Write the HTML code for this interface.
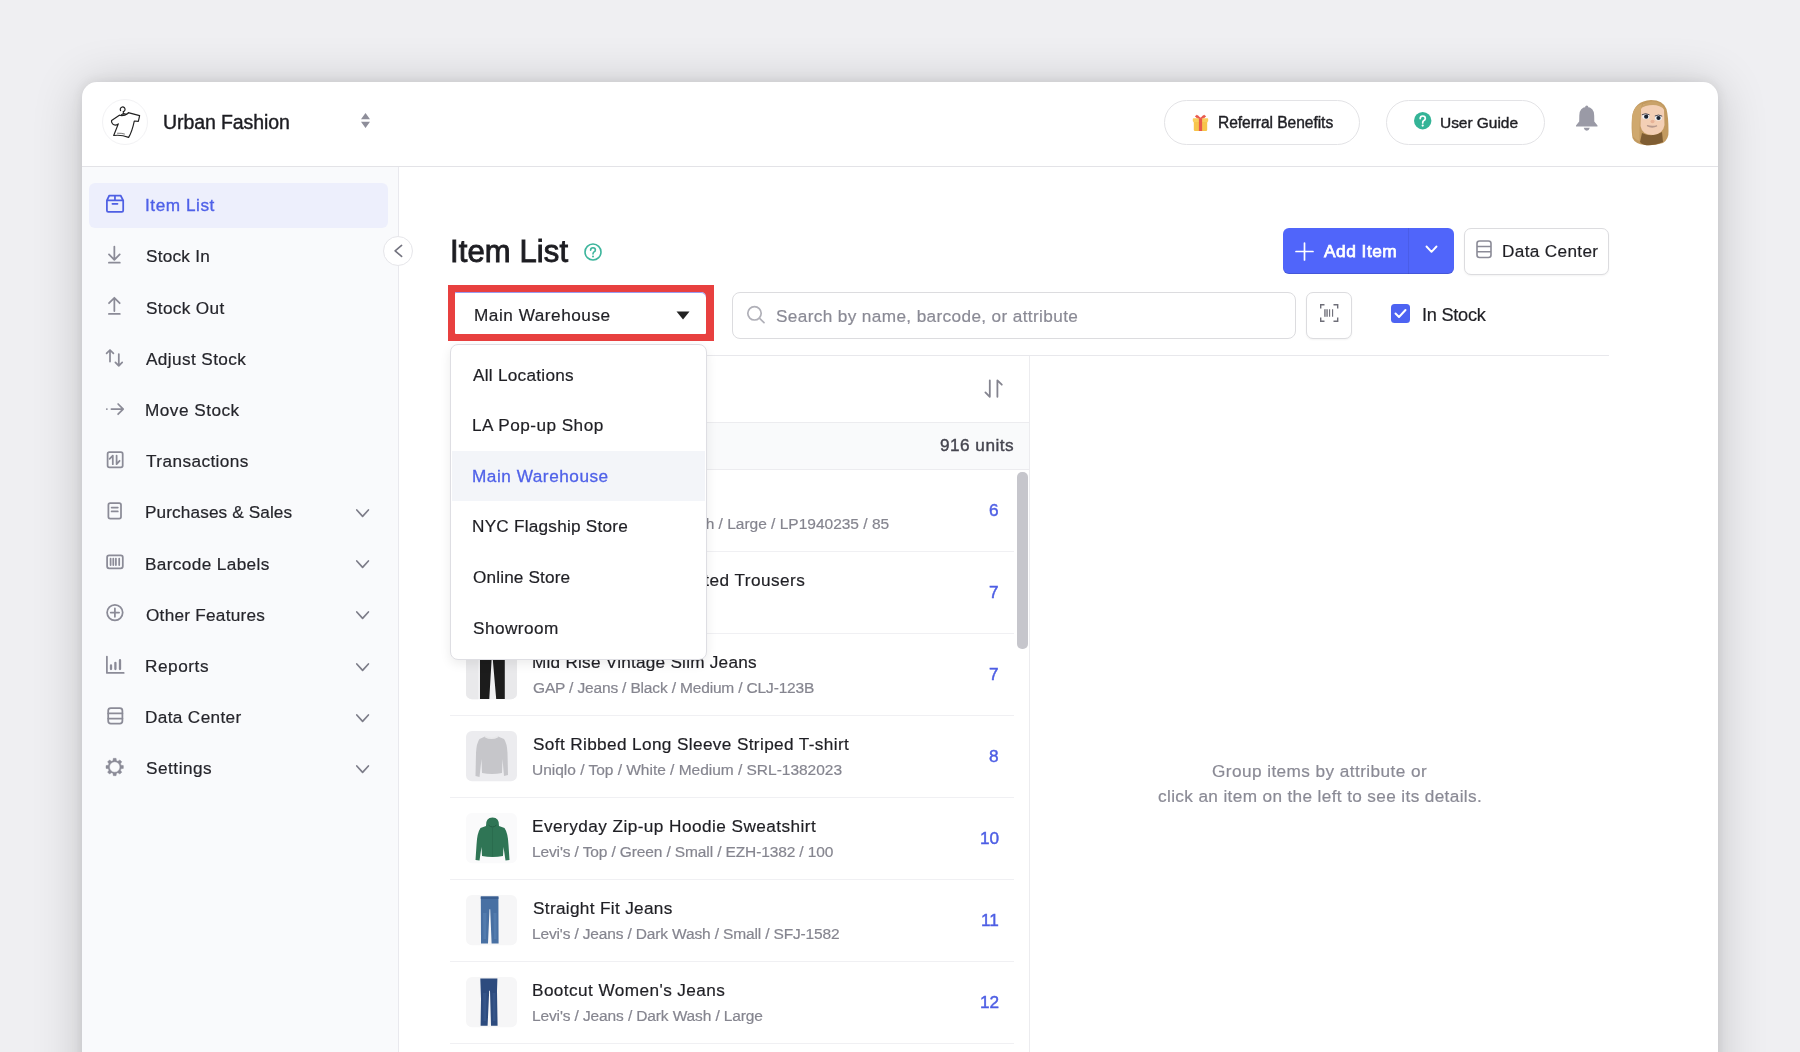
<!DOCTYPE html><html><head><meta charset='utf-8'><style>
*{margin:0;padding:0;box-sizing:border-box}
html,body{width:1800px;height:1052px;overflow:hidden;background:#efeff2;-webkit-font-smoothing:antialiased;font-family:"Liberation Sans",sans-serif;color:#1f1f24}
.a{position:absolute}
.t{position:absolute;line-height:1;white-space:nowrap;will-change:transform;-webkit-text-stroke:0.2px currentColor}
svg{position:absolute;overflow:visible}
</style></head><body>
<div class="a" style="left:82px;top:82px;width:1636px;height:1040px;background:#fff;border-radius:15px;box-shadow:0 4px 50px rgba(0,0,0,0.19),0 0 12px rgba(0,0,0,0.09)"></div>
<div class="a" style="left:82px;top:166px;width:1636px;height:1px;background:#e3e3e7;"></div>
<div class="a" style="left:82px;top:167px;width:317px;height:900px;background:#f9fafc;border-right:1px solid #e9e9ee"></div>
<div class="a" style="left:102px;top:99px;width:46px;height:46px;background:#fff;border-radius:50%;border:1px solid #f2f2f4"></div>
<svg style="left:105px;top:102px;" width="40" height="40" viewBox="0 0 40 40"><g fill="none" stroke="#222" stroke-width="1.2" stroke-linecap="round" stroke-linejoin="round"><path d="M15.6 8.6 A2.4 2.4 0 1 1 18.2 9.7 L18.7 11.8"/><path d="M16.2 12.9 L18.4 11.6 L21.6 12.3"/><path d="M14.4 13.3 Q18.6 14.6 23.2 11.2"/><path d="M23.2 10.6 L34.6 13.7 Q34 17 33.3 19.4 L29.3 19 Q27 30 23.6 35.4 Q16 32.5 8.7 33.5 L13.3 21.9 Q10 24.2 7.6 21.8 Q6 20 6.6 18.6 L14.4 13.3"/><path d="M12.5 31.2 Q16.5 31 19.5 32" stroke-width="1" opacity="0.6"/></g></svg>
<div class="t" style="top:113.19px;font-size:19.5px;color:#1d1d22;-webkit-text-stroke:0.4px currentColor;letter-spacing:-0.088px;left:163.00px;">Urban Fashion</div>
<svg style="left:360px;top:112px;" width="11" height="17" viewBox="0 0 11 17"><path d="M5.5 1 L10 7.3 L1 7.3 Z M1 9.7 L10 9.7 L5.5 16 Z" fill="#8e8e9a"/></svg>
<div class="a" style="left:1164px;top:99.5px;width:196px;height:45.5px;background:#fff;border:1px solid #e3e3e6;border-radius:23px"></div>
<svg style="left:1192px;top:113.5px;" width="17" height="17" viewBox="0 0 17 17"><rect x="1.8" y="7" width="13.4" height="10" rx="1.2" fill="#f7c54b"/><rect x="0.8" y="4.3" width="15.4" height="3.6" rx="0.8" fill="#f9cf5c"/><rect x="6.9" y="4.3" width="3.2" height="12.7" fill="#e8594b"/><path d="M8.5 4.3 Q5 0 3.6 2 Q3 3.8 8.5 4.3 M8.5 4.3 Q12 0 13.4 2 Q14 3.8 8.5 4.3" fill="#e8594b" stroke="#e8594b" stroke-width="0.8"/></svg>
<div class="t" style="top:114.79px;font-size:15.6px;color:#1f1f24;-webkit-text-stroke:0.4px currentColor;letter-spacing:-0.059px;left:1218.00px;">Referral Benefits</div>
<div class="a" style="left:1386px;top:99.5px;width:159px;height:45.5px;background:#fff;border:1px solid #e3e3e6;border-radius:23px"></div>
<svg style="left:1413.9px;top:111.8px;" width="18" height="18" viewBox="0 0 18 18"><circle cx="8.7" cy="8.7" r="8.7" fill="#34b497"/><path d="M6.2 6.6 Q6.2 4 8.7 4 Q11.3 4 11.3 6.4 Q11.3 7.9 9.6 8.7 Q8.7 9.2 8.7 10.9" fill="none" stroke="#fff" stroke-width="1.7" stroke-linecap="round"/><circle cx="8.7" cy="13.6" r="1.1" fill="#fff"/></svg>
<div class="t" style="top:114.88px;font-size:15.5px;color:#1f1f24;-webkit-text-stroke:0.4px currentColor;letter-spacing:-0.041px;left:1440.10px;">User Guide</div>
<svg style="left:1575.5px;top:104px;" width="22" height="27" viewBox="0 0 22 27"><path d="M10.75 3 Q18 3 18.2 11.5 L18.3 17.5 L21.5 21.4 L21.5 22.6 L0 22.6 L0 21.4 L3.2 17.5 L3.3 11.5 Q3.5 3 10.75 3 Z" fill="#9a9aa6"/><circle cx="10.75" cy="3" r="1.6" fill="#9a9aa6"/><path d="M7.7 23.8 Q8.5 26.8 10.75 26.8 Q13 26.8 13.8 23.8 Z" fill="#9a9aa6"/></svg>
<svg style="left:1625px;top:95px;" width="50" height="55" viewBox="0 0 50 55"><path d="M26 5 Q38 5 41.5 14 Q43.5 22 43.5 36 Q44 44 38 48 Q28 51 20 50 Q10 49 7.5 43 Q6 34 7 22 Q9 6 26 5 Z" fill="#c29a60"/><path d="M17 38 Q27 43 37 37 L38 47 Q28 51 20 50 Q16 49 15 47 Z" fill="#7f5d33"/><path d="M16 14 Q18 7.5 27 7.5 Q37 8 39 15 L39.5 30 Q38 39 28 40 Q17 40 15.5 31 Z" fill="#f3cfb5"/><path d="M15 14 Q20 6 28 6.5 Q37 7 40 15 Q35 10 28 10 Q20 10 15 14 Z" fill="#c9a26a"/><path d="M7 22 Q9 10 17 9 Q14 20 14.5 46 Q9 44 7.5 40 Z" fill="#cfa86e"/><ellipse cx="20.8" cy="21.6" rx="3.6" ry="2.6" fill="#eef2f6"/><ellipse cx="33.4" cy="22.9" rx="3.5" ry="2.6" fill="#eef2f6"/><circle cx="21.2" cy="21.7" r="2.1" fill="#1b2230"/><circle cx="33.5" cy="23" r="2.1" fill="#1b2230"/><path d="M16.8 19.8 Q20.5 17.6 24.5 19.8 M29.8 21 Q33.5 19 37.2 21.2" fill="none" stroke="#3a3a48" stroke-width="0.9"/><ellipse cx="27.5" cy="26.5" rx="2" ry="1.8" fill="#e8b398"/><path d="M22 30.6 Q27 33.5 32 30.8 Q27 32.2 22 30.6 Z" fill="#9a8c86" stroke="#b89a8e" stroke-width="1.2"/></svg>
<div class="a" style="left:89px;top:183px;width:299px;height:45px;background:#edeffc;border-radius:6px"></div>
<div class="t" style="top:197.24px;font-size:17.2px;color:#4f61e8;-webkit-text-stroke:0.35px currentColor;letter-spacing:0.553px;left:145.00px;">Item List</div>
<div class="t" style="top:248.42px;font-size:17.2px;color:#25252b;letter-spacing:0.245px;left:146.00px;">Stock In</div>
<div class="t" style="top:299.60px;font-size:17.2px;color:#25252b;letter-spacing:0.339px;left:146.00px;">Stock Out</div>
<div class="t" style="top:350.78px;font-size:17.2px;color:#25252b;letter-spacing:0.397px;left:146.00px;">Adjust Stock</div>
<div class="t" style="top:401.96px;font-size:17.2px;color:#25252b;letter-spacing:0.489px;left:145.00px;">Move Stock</div>
<div class="t" style="top:453.14px;font-size:17.2px;color:#25252b;letter-spacing:0.422px;left:146.00px;">Transactions</div>
<div class="t" style="top:504.32px;font-size:17.2px;color:#25252b;letter-spacing:0.118px;left:145.00px;">Purchases &amp; Sales</div>
<svg style="left:356px;top:509.1px;" width="14" height="9" viewBox="0 0 14 9"><path d="M0.8 1 L6.6 7.3 L12.4 1" fill="none" stroke="#7d7d89" stroke-width="1.7" stroke-linecap="round" stroke-linejoin="round"/></svg>
<div class="t" style="top:555.50px;font-size:17.2px;color:#25252b;letter-spacing:0.373px;left:145.00px;">Barcode Labels</div>
<svg style="left:356px;top:560.3px;" width="14" height="9" viewBox="0 0 14 9"><path d="M0.8 1 L6.6 7.3 L12.4 1" fill="none" stroke="#7d7d89" stroke-width="1.7" stroke-linecap="round" stroke-linejoin="round"/></svg>
<div class="t" style="top:606.68px;font-size:17.2px;color:#25252b;letter-spacing:0.254px;left:146.00px;">Other Features</div>
<svg style="left:356px;top:611.4px;" width="14" height="9" viewBox="0 0 14 9"><path d="M0.8 1 L6.6 7.3 L12.4 1" fill="none" stroke="#7d7d89" stroke-width="1.7" stroke-linecap="round" stroke-linejoin="round"/></svg>
<div class="t" style="top:657.86px;font-size:17.2px;color:#25252b;letter-spacing:0.552px;left:145.00px;">Reports</div>
<svg style="left:356px;top:662.6px;" width="14" height="9" viewBox="0 0 14 9"><path d="M0.8 1 L6.6 7.3 L12.4 1" fill="none" stroke="#7d7d89" stroke-width="1.7" stroke-linecap="round" stroke-linejoin="round"/></svg>
<div class="t" style="top:709.04px;font-size:17.2px;color:#25252b;letter-spacing:0.356px;left:145.00px;">Data Center</div>
<svg style="left:356px;top:713.8px;" width="14" height="9" viewBox="0 0 14 9"><path d="M0.8 1 L6.6 7.3 L12.4 1" fill="none" stroke="#7d7d89" stroke-width="1.7" stroke-linecap="round" stroke-linejoin="round"/></svg>
<div class="t" style="top:760.22px;font-size:17.2px;color:#25252b;letter-spacing:0.513px;left:146.00px;">Settings</div>
<svg style="left:356px;top:765.0px;" width="14" height="9" viewBox="0 0 14 9"><path d="M0.8 1 L6.6 7.3 L12.4 1" fill="none" stroke="#7d7d89" stroke-width="1.7" stroke-linecap="round" stroke-linejoin="round"/></svg>
<svg style="left:105px;top:194.0px;" width="20" height="20" viewBox="0 0 20 20"><g fill="none" stroke="#4e5fe3" stroke-width="1.75" stroke-linecap="round" stroke-linejoin="round"><path d="M1.9 6.4 L4.3 1.5 H15.6 L18.2 6.4 V16.6 Q18.2 17.9 16.9 17.9 H3.2 Q1.9 17.9 1.9 16.6 Z M1.9 6.4 H18.2 M9.95 1.5 V6.4 M7.4 9.8 H12.5"/></g></svg>
<svg style="left:105px;top:245.18px;" width="20" height="20" viewBox="0 0 20 20"><g fill="none" stroke="#8b8b97" stroke-width="1.75" stroke-linecap="round" stroke-linejoin="round"><path d="M9.35 1.5 V14.6 M4 9.4 L9.35 14.8 L14.7 9.4 M3.9 17.7 H14.8"/></g></svg>
<svg style="left:105px;top:296.36px;" width="20" height="20" viewBox="0 0 20 20"><g fill="none" stroke="#8b8b97" stroke-width="1.75" stroke-linecap="round" stroke-linejoin="round"><path d="M9.35 15 V1.8 M4 7.2 L9.35 1.8 L14.7 7.2 M3.9 17.9 H14.8"/></g></svg>
<svg style="left:105px;top:347.54px;" width="20" height="20" viewBox="0 0 20 20"><g fill="none" stroke="#8b8b97" stroke-width="1.75" stroke-linecap="round" stroke-linejoin="round"><path d="M5 2 V13.6 M1.6 5.4 L5 2 L8.4 5.4 M13.8 6 V17.8 M10.4 14.4 L13.8 17.8 L17.2 14.4"/></g></svg>
<svg style="left:105px;top:398.72px;" width="20" height="20" viewBox="0 0 20 20"><g fill="none" stroke="#8b8b97" stroke-width="1.75" stroke-linecap="round" stroke-linejoin="round"><path d="M1.8 10.1 H1.9 M6.4 10.1 H18.2 M13.1 5 L18.2 10.1 L13.1 15.2"/></g></svg>
<svg style="left:105px;top:449.9px;" width="20" height="20" viewBox="0 0 20 20"><g fill="none" stroke="#8b8b97" stroke-width="1.75" stroke-linecap="round" stroke-linejoin="round"><rect x="2.6" y="2.1" width="15.1" height="15.3" rx="1.8"/><path d="M7.8 14.2 V5.6 L4.6 8.8 M11.6 5.6 V14.2 L14.6 10.8"/></g></svg>
<svg style="left:105px;top:501.08px;" width="20" height="20" viewBox="0 0 20 20"><g fill="none" stroke="#8b8b97" stroke-width="1.75" stroke-linecap="round" stroke-linejoin="round"><rect x="3.4" y="2.1" width="12.6" height="15.5" rx="1.8"/><path d="M6.6 6.6 H12.8 M6.6 10.4 H12.8"/></g></svg>
<svg style="left:105px;top:552.26px;" width="20" height="20" viewBox="0 0 20 20"><g fill="none" stroke="#8b8b97" stroke-width="1.75" stroke-linecap="round" stroke-linejoin="round"><rect x="2.1" y="3.4" width="15.7" height="12.9" rx="2"/><path d="M5.6 6.6 V13.1 M8.3 6.6 V13.1 M10.9 6.6 V13.1 M14.2 6.6 V13.1"/></g></svg>
<svg style="left:105px;top:603.44px;" width="20" height="20" viewBox="0 0 20 20"><g fill="none" stroke="#8b8b97" stroke-width="1.75" stroke-linecap="round" stroke-linejoin="round"><circle cx="9.9" cy="9.6" r="7.8"/><path d="M9.9 5.4 V13.8 M5.7 9.6 H14.1"/></g></svg>
<svg style="left:105px;top:654.62px;" width="20" height="20" viewBox="0 0 20 20"><g fill="none" stroke="#8b8b97" stroke-width="1.75" stroke-linecap="round" stroke-linejoin="round"><path d="M1.9 1.6 V17.9 H18.7"/><path d="M6 10.5 V14.1 M10.4 7.8 V14.1 M15 5.2 V14.1" stroke-width="2.3"/></g></svg>
<svg style="left:105px;top:705.8px;" width="20" height="20" viewBox="0 0 20 20"><g fill="none" stroke="#8b8b97" stroke-width="1.75" stroke-linecap="round" stroke-linejoin="round"><rect x="3.2" y="2.2" width="14.2" height="15.5" rx="2.6"/><path d="M3.2 7.4 H17.4 M3.2 12.6 H17.4"/></g></svg>
<svg style="left:105px;top:756.98px;" width="20" height="20" viewBox="0 0 20 20"><path d="M7.88 3.66 L8.32 1.31 L11.08 1.31 L11.52 3.66 L12.90 4.23 L14.87 2.88 L16.82 4.83 L15.47 6.80 L16.04 8.18 L18.39 8.62 L18.39 11.38 L16.04 11.82 L15.47 13.20 L16.82 15.17 L14.87 17.12 L12.90 15.77 L11.52 16.34 L11.08 18.69 L8.32 18.69 L7.88 16.34 L6.50 15.77 L4.53 17.12 L2.58 15.17 L3.93 13.20 L3.36 11.82 L1.01 11.38 L1.01 8.62 L3.36 8.18 L3.93 6.80 L2.58 4.83 L4.53 2.88 L6.50 4.23 Z M14.90 10.00 A5.2 5.2 0 1 0 4.50 10.00 A5.2 5.2 0 1 0 14.90 10.00 Z" fill="#8b8b97" fill-rule="evenodd" stroke="#8b8b97" stroke-width="0.4" stroke-linejoin="round"/></svg>
<div class="a" style="left:383.3px;top:236.3px;width:30.2px;height:30.2px;background:#fff;border-radius:50%;border:1px solid #e6e6ea"></div>
<svg style="left:393px;top:244px;" width="10" height="14" viewBox="0 0 10 14"><path d="M8.6 1.4 L2.1 6.8 L8.6 12.4" fill="none" stroke="#73737f" stroke-width="1.6" stroke-linecap="round" stroke-linejoin="round"/></svg>
<div class="t" style="top:235.56px;font-size:31px;color:#1d1d22;-webkit-text-stroke:0.9px currentColor;letter-spacing:0.109px;left:450.30px;">Item List</div>
<svg style="left:584px;top:243px;" width="18" height="18" viewBox="0 0 18 18"><circle cx="9" cy="9" r="8" fill="none" stroke="#3db59c" stroke-width="1.6"/><path d="M6.6 7.2 Q6.6 4.7 9 4.7 Q11.4 4.7 11.4 7 Q11.4 8.4 9.8 9.1 Q9 9.5 9 11" fill="none" stroke="#3db59c" stroke-width="1.6" stroke-linecap="round"/><circle cx="9" cy="13.4" r="1" fill="#3db59c"/></svg>
<div class="a" style="left:1283px;top:228px;width:171px;height:46.4px;background:#5065fa;border-radius:6px;box-shadow:inset 0 -1px 0 rgba(0,0,0,0.13)"></div>
<div class="a" style="left:1408px;top:228px;width:1px;height:46px;background:rgba(0,0,0,0.07);"></div>
<svg style="left:1295px;top:242px;" width="19" height="19" viewBox="0 0 19 19"><path d="M9.5 1 V18 M1 9.5 H18" stroke="#fff" stroke-width="1.7" stroke-linecap="round"/></svg>
<div class="t" style="top:242.66px;font-size:17.3px;color:#fff;-webkit-text-stroke:0.75px currentColor;letter-spacing:0.505px;left:1323.80px;">Add Item</div>
<svg style="left:1425px;top:244.5px;" width="13" height="9" viewBox="0 0 13 9"><path d="M1.5 1.5 L6.5 6.8 L11.5 1.5" fill="none" stroke="#fff" stroke-width="1.9" stroke-linecap="round" stroke-linejoin="round"/></svg>
<div class="a" style="left:1464px;top:228px;width:145px;height:46.5px;background:#fff;border:1px solid #dcdcdf;border-radius:7px;box-shadow:0 1px 2px rgba(0,0,0,0.05)"></div>
<svg style="left:1476px;top:240px;" width="16" height="18" viewBox="0 0 16 18"><rect x="1" y="1" width="14" height="16.5" rx="2.5" fill="none" stroke="#8b8b97" stroke-width="1.6"/><path d="M1 6.5 H15 M1 11.8 H15" stroke="#8b8b97" stroke-width="1.6"/></svg>
<div class="t" style="top:242.94px;font-size:17.2px;color:#1f1f24;letter-spacing:0.336px;left:1502.30px;">Data Center</div>
<div class="a" style="left:732px;top:292px;width:564px;height:46.5px;background:#fff;border:1px solid #dcdcdf;border-radius:8px"></div>
<svg style="left:746px;top:305px;" width="20" height="20" viewBox="0 0 20 20"><circle cx="8.5" cy="8.3" r="6.7" fill="none" stroke="#b0b0b8" stroke-width="1.7"/><path d="M13.4 13.2 L18 17.6" stroke="#b0b0b8" stroke-width="1.7" stroke-linecap="round"/></svg>
<div class="t" style="top:308.44px;font-size:17.2px;color:#8a8a95;letter-spacing:0.37px;left:776.00px;">Search by name, barcode, or attribute</div>
<div class="a" style="left:1305.5px;top:292px;width:46px;height:46.5px;background:#fff;border:1px solid #dcdcdf;border-radius:7px;box-shadow:0 1px 2px rgba(0,0,0,0.05)"></div>
<svg style="left:1319.7px;top:303.9px;" width="18.4" height="18" viewBox="0 0 18.4 18"><path d="M0.7 4.5 V0.7 H4.5 M13.5 0.7 H17.7 V4.5 M17.7 13.5 V17.3 H13.5 M4.5 17.3 H0.7 V13.5" fill="none" stroke="#6e6e78" stroke-width="1.4"/><path d="M4.8 5.2 V12.8 M7.2 5.2 V12.8 M9.6 5.2 V12.8 M12.6 5.2 V12.8" stroke="#6e6e78" stroke-width="1.1"/><path d="M6 5.2 V12.8" stroke="#6e6e78" stroke-width="0.8"/></svg>
<div class="a" style="left:1391.2px;top:304.3px;width:18.5px;height:18.5px;background:#4d63f2;border-radius:3.5px"></div>
<svg style="left:1391.2px;top:304.3px;" width="19" height="19" viewBox="0 0 19 19"><path d="M4.5 9.5 L8 13 L14.5 6" fill="none" stroke="#fff" stroke-width="2" stroke-linecap="round" stroke-linejoin="round"/></svg>
<div class="t" style="top:306.49px;font-size:18.2px;color:#1f1f24;letter-spacing:-0.259px;left:1421.70px;">In Stock</div>
<div class="a" style="left:451px;top:355px;width:1158px;height:1px;background:#e8e8ec;"></div>
<div class="a" style="left:1029px;top:356px;width:1px;height:700px;background:#ececef;"></div>
<svg style="left:984px;top:379px;" width="20" height="20" viewBox="0 0 20 20"><path d="M5.8 1.3 V17.8 L1.4 13.4 M13.4 17.8 V1.3 L17.8 5.7" fill="none" stroke="#84848f" stroke-width="1.8" stroke-linecap="round" stroke-linejoin="round"/></svg>
<div class="a" style="left:451px;top:422px;width:578px;height:1px;background:#ececef;"></div>
<div class="a" style="left:451px;top:423px;width:578px;height:46px;background:#f9fafb;"></div>
<div class="a" style="left:451px;top:469px;width:578px;height:1px;background:#ececef;"></div>
<div class="t" style="top:437.44px;font-size:17.2px;color:#45454f;-webkit-text-stroke:0.4px currentColor;letter-spacing:0.48px;left:940.20px;">916 units</div>
<svg style="left:466px;top:484.5px;" width="51" height="51" viewBox="0 0 51 51"><defs><clipPath id="c484"><rect width="51" height="50.3" rx="6"/></clipPath></defs><g clip-path="url(#c484)"><rect width="51" height="51" fill="#f2f2f4"/><path d="M16 4 H34 L36 47 H28 L25 18 L22 47 H14 Z" fill="#3a5f94"/></g></svg>
<div class="t" style="top:489.94px;font-size:17.2px;color:#1f1f24;letter-spacing:-2.215px;left:532.00px;">Relaxed Taper Jeans</div>
<div class="t" style="top:516.18px;font-size:15.5px;color:#85858f;letter-spacing:-0.005px;left:532.00px;">Levi&#39;s / Jeans / Dark Wash / Large / LP1940235 / 85</div>
<div class="t" style="top:502.14px;font-size:17.2px;color:#4d5ee4;-webkit-text-stroke:0.45px currentColor;right:801px;">6</div>
<div class="a" style="left:450px;top:551px;width:564px;height:1px;background:#f0f0f3;"></div>
<svg style="left:466px;top:566.5px;" width="51" height="51" viewBox="0 0 51 51"><defs><clipPath id="c566"><rect width="51" height="50.3" rx="6"/></clipPath></defs><g clip-path="url(#c566)"><rect width="51" height="51" fill="#f2f2f4"/><path d="M16 4 H34 L36 47 H28 L25 18 L22 47 H14 Z" fill="#7a6a55"/></g></svg>
<div class="t" style="top:571.94px;font-size:17.2px;color:#1f1f24;letter-spacing:0.449px;left:533.00px;">Tailored Slim Fit Pleated Trousers</div>
<div class="t" style="top:584.14px;font-size:17.2px;color:#4d5ee4;-webkit-text-stroke:0.45px currentColor;right:801px;">7</div>
<div class="a" style="left:450px;top:633px;width:564px;height:1px;background:#f0f0f3;"></div>
<svg style="left:466px;top:648.5px;" width="51" height="51" viewBox="0 0 51 51"><defs><clipPath id="c648"><rect width="51" height="50.3" rx="6"/></clipPath></defs><g clip-path="url(#c648)"><rect width="51" height="51" fill="#f0f0f2"/><rect x="0" y="0" width="12" height="51" fill="#e9e9eb"/><rect x="39" y="0" width="12" height="51" fill="#e9e9eb"/><path d="M14 -2 H38.8 L38.8 50 H30.2 L26.8 10.5 L25.6 10.5 L23.3 50 H14 Z" fill="#1c1c1c"/></g></svg>
<div class="t" style="top:653.94px;font-size:17.2px;color:#1f1f24;letter-spacing:0.237px;left:532.00px;">Mid Rise Vintage Slim Jeans</div>
<div class="t" style="top:680.18px;font-size:15.5px;color:#85858f;letter-spacing:-0.16px;left:533.00px;">GAP / Jeans / Black / Medium / CLJ-123B</div>
<div class="t" style="top:666.14px;font-size:17.2px;color:#4d5ee4;-webkit-text-stroke:0.45px currentColor;right:801px;">7</div>
<div class="a" style="left:450px;top:715px;width:564px;height:1px;background:#f0f0f3;"></div>
<svg style="left:466px;top:730.5px;" width="51" height="51" viewBox="0 0 51 51"><defs><clipPath id="c730"><rect width="51" height="50.3" rx="6"/></clipPath></defs><g clip-path="url(#c730)"><rect width="51" height="51" fill="#ececef"/><path d="M19 5.5 Q25.5 9 32 5.5 L38 8 Q41 12 41.5 22 L42 44 L38 45 L36.5 28 L36 42 Q26 44 16 42 L15.5 28 L13.5 46 L9.5 45 L10 22 Q10.5 12 13.5 8 Z" fill="#c6c6ca"/><path d="M19 5.5 Q25.5 9 32 5.5" fill="none" stroke="#e8e8ea" stroke-width="1.5"/></g></svg>
<div class="t" style="top:735.94px;font-size:17.2px;color:#1f1f24;letter-spacing:0.373px;left:533.00px;">Soft Ribbed Long Sleeve Striped T-shirt</div>
<div class="t" style="top:762.18px;font-size:15.5px;color:#85858f;letter-spacing:-0.017px;left:532.00px;">Uniqlo / Top / White / Medium / SRL-1382023</div>
<div class="t" style="top:748.14px;font-size:17.2px;color:#4d5ee4;-webkit-text-stroke:0.45px currentColor;right:801px;">8</div>
<div class="a" style="left:450px;top:797px;width:564px;height:1px;background:#f0f0f3;"></div>
<svg style="left:466px;top:812.5px;" width="51" height="51" viewBox="0 0 51 51"><defs><clipPath id="c812"><rect width="51" height="50.3" rx="6"/></clipPath></defs><g clip-path="url(#c812)"><rect width="51" height="51" fill="#fafafb"/><path d="M20 13 Q19.5 4.5 26.5 4.5 Q33.5 4.5 33 13 L38.5 15 Q42 20 42.5 32 L43.5 47 L39.5 47.5 L37.5 34 L37 43 Q26.5 45 16 43 L15.5 34 L13.5 47.5 L9.5 47 L10.5 32 Q11 20 14.5 15 Z" fill="#2f7555"/><path d="M22.5 12 Q26.5 16 30.5 12" fill="none" stroke="#245e44" stroke-width="1"/><path d="M26.5 15 V43" stroke="#2a6a4c" stroke-width="0.8"/></g></svg>
<div class="t" style="top:817.94px;font-size:17.2px;color:#1f1f24;letter-spacing:0.449px;left:532.00px;">Everyday Zip-up Hoodie Sweatshirt</div>
<div class="t" style="top:844.18px;font-size:15.5px;color:#85858f;letter-spacing:-0.124px;left:532.00px;">Levi&#39;s / Top / Green / Small / EZH-1382 / 100</div>
<div class="t" style="top:830.14px;font-size:17.2px;color:#4d5ee4;-webkit-text-stroke:0.45px currentColor;right:801px;">10</div>
<div class="a" style="left:450px;top:879px;width:564px;height:1px;background:#f0f0f3;"></div>
<svg style="left:466px;top:894.5px;" width="51" height="51" viewBox="0 0 51 51"><defs><clipPath id="c894"><rect width="51" height="50.3" rx="6"/></clipPath></defs><g clip-path="url(#c894)"><rect width="51" height="51" fill="#f6f6f7"/><path d="M14.8 1.5 H32.4 L32.6 48.5 H25.6 L24.2 14.3 L23.5 14.3 L22 48.5 H15 Z" fill="#4870a3"/><path d="M17 18 L20.5 18 L20 44 L17.5 44 Z M27.5 18 L30.5 18 L30.5 44 L28 44 Z" fill="#5a82b4" opacity="0.6"/><path d="M14.8 1.5 H32.4 V4 H14.8 Z" fill="#3a5e90"/></g></svg>
<div class="t" style="top:899.94px;font-size:17.2px;color:#1f1f24;letter-spacing:0.327px;left:533.00px;">Straight Fit Jeans</div>
<div class="t" style="top:926.18px;font-size:15.5px;color:#85858f;letter-spacing:-0.15px;left:532.00px;">Levi&#39;s / Jeans / Dark Wash / Small / SFJ-1582</div>
<div class="t" style="top:912.14px;font-size:17.2px;color:#4d5ee4;-webkit-text-stroke:0.45px currentColor;right:801px;">11</div>
<div class="a" style="left:450px;top:961px;width:564px;height:1px;background:#f0f0f3;"></div>
<svg style="left:466px;top:976.5px;" width="51" height="51" viewBox="0 0 51 51"><defs><clipPath id="c976"><rect width="51" height="50.3" rx="6"/></clipPath></defs><g clip-path="url(#c976)"><rect width="51" height="51" fill="#f6f6f7"/><path d="M14.3 1.5 H31.4 L31 14 L31.6 48.8 H25 L24 13.8 L23.2 13.8 L21.6 48.8 H14.6 L15 22 Z" fill="#2d4b7e"/><path d="M17 16 L20.5 16 L20 44 L17.5 44 Z M26.5 16 L29.5 16 L29.5 44 L27 44 Z" fill="#3a5a90" opacity="0.6"/></g></svg>
<div class="t" style="top:981.94px;font-size:17.2px;color:#1f1f24;letter-spacing:0.421px;left:532.00px;">Bootcut Women&#39;s Jeans</div>
<div class="t" style="top:1008.18px;font-size:15.5px;color:#85858f;letter-spacing:-0.123px;left:532.00px;">Levi&#39;s / Jeans / Dark Wash / Large</div>
<div class="t" style="top:994.14px;font-size:17.2px;color:#4d5ee4;-webkit-text-stroke:0.45px currentColor;right:801px;">12</div>
<div class="a" style="left:450px;top:1043px;width:564px;height:1px;background:#f0f0f3;"></div>
<div class="a" style="left:1017px;top:472px;width:10.5px;height:177px;background:#c6c6cc;border-radius:5px"></div>
<div class="t" style="top:762.84px;font-size:17.2px;color:#8a8a95;letter-spacing:0.433px;left:1212.00px;">Group items by attribute or</div>
<div class="t" style="top:787.84px;font-size:17.2px;color:#8a8a95;letter-spacing:0.367px;left:1158.00px;">click an item on the left to see its details.</div>
<div class="a" style="left:448px;top:285px;width:266px;height:56px;background:#e8403f;"></div>
<div class="a" style="left:454.7px;top:292px;width:251.3px;height:42.3px;background:#fff;border-radius:1px 5px 1px 1px;box-shadow:inset 0 1px 0 #9a9af0"></div>
<div class="t" style="top:306.84px;font-size:17.2px;color:#1f1f24;letter-spacing:0.521px;left:474.00px;">Main Warehouse</div>
<svg style="left:676px;top:310.5px;" width="14" height="9" viewBox="0 0 14 9"><path d="M0.5 0.5 H13.5 L7 8.5 Z" fill="#222"/></svg>
<div class="a" style="left:450px;top:343.5px;width:256.5px;height:316px;background:#fff;border:1px solid #dedee3;border-radius:8px;box-shadow:0 4px 11px rgba(0,0,0,0.08)"></div>
<div class="a" style="left:452px;top:451px;width:253px;height:50px;background:#f3f5f9;"></div>
<div class="t" style="top:366.54px;font-size:17.2px;color:#1f1f24;letter-spacing:0.27px;left:473.40px;">All Locations</div>
<div class="t" style="top:417.19px;font-size:17.2px;color:#1f1f24;letter-spacing:0.463px;left:472.40px;">LA Pop-up Shop</div>
<div class="t" style="top:467.84px;font-size:17.2px;color:#4f61e8;-webkit-text-stroke:0.3px currentColor;letter-spacing:0.529px;left:472.40px;">Main Warehouse</div>
<div class="t" style="top:518.49px;font-size:17.2px;color:#1f1f24;letter-spacing:0.234px;left:472.40px;">NYC Flagship Store</div>
<div class="t" style="top:569.14px;font-size:17.2px;color:#1f1f24;letter-spacing:0.147px;left:473.40px;">Online Store</div>
<div class="t" style="top:619.79px;font-size:17.2px;color:#1f1f24;letter-spacing:0.438px;left:473.40px;">Showroom</div>
</body></html>
